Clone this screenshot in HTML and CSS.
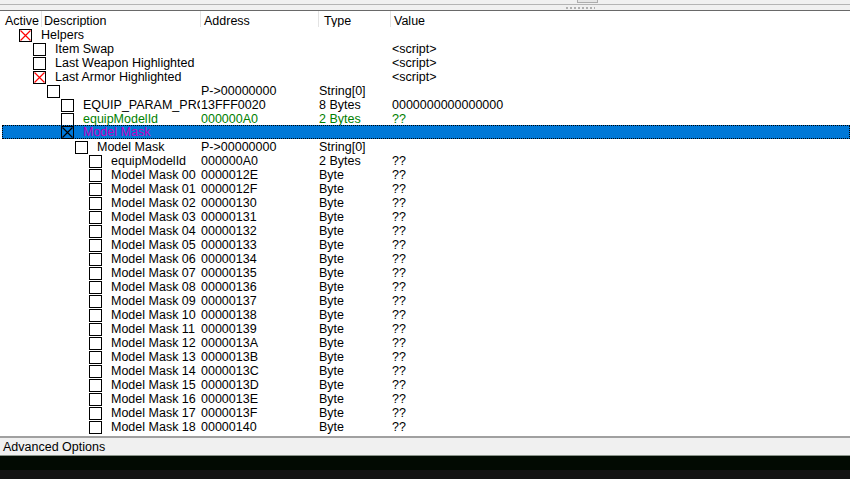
FILE: index.html
```html
<!DOCTYPE html>
<html>
<head>
<meta charset="utf-8">
<link rel="stylesheet" href="styles.css">
</head>
<body>
<div class="app">
  <div class="topbar">
    <div class="topbtn"></div>
  </div>
  <div class="splitter"><span class="grip"></span></div>
  <div class="tree">
    <div class="header">
      <div class="h h-active">Active</div>
      <div class="h h-desc">Description</div>
      <div class="h h-addr">Address</div>
      <div class="h h-type">Type</div>
      <div class="h h-val">Value</div>
    </div>
    <div class="rows" id="rows"></div>
  </div>
  <div class="adv">Advanced Options</div>
  <div class="strip1"></div>
  <div class="strip2"></div>
</div>
<script src="app.js"></script>
</body>
</html>
```

FILE: app.js
```js
const rows = [
  [0, 'x', 'Helpers', '', '', ''],
  [1, '', 'Item Swap', '', '', '<script>'],
  [1, '', 'Last Weapon Highlighted', '', '', '<script>'],
  [1, 'x', 'Last Armor Highlighted', '', '', '<script>'],
  [2, '', '', 'P->00000000', 'String[0]', ''],
  [3, '', 'EQUIP_PARAM_PROTECTOR', '13FFF0020', '8 Bytes', '0000000000000000'],
  [3, '', 'equipModelId', '000000A0', '2 Bytes', '??', 'green'],
  [3, 'k', 'Model Mask', '', '', '', 'sel'],
  [4, '', 'Model Mask', 'P->00000000', 'String[0]', ''],
  [5, '', 'equipModelId', '000000A0', '2 Bytes', '??']
];
const hex = ['12E','12F','130','131','132','133','134','135','136','137','138','139','13A','13B','13C','13D','13E','13F','140'];
hex.forEach((h, i) => {
  rows.push([5, '', 'Model Mask ' + String(i).padStart(2, '0'), '00000' + h, 'Byte', '??']);
});
const box = {
  '': '<svg class="cb" width="13" height="13" viewBox="0 0 13 13" shape-rendering="crispEdges"><rect x="0.5" y="0.5" width="12" height="12" fill="#fff" stroke="#000"/></svg>',
  'x': '<svg class="cb" width="13" height="13" viewBox="0 0 13 13"><rect x="0.5" y="0.5" width="12" height="12" fill="#fff" stroke="#000" shape-rendering="crispEdges"/><path d="M1.5 1.5L11.5 11.5M11.5 1.5L1.5 11.5" stroke="#ff0000" stroke-width="1.2"/></svg>',
  'k': '<svg class="cb" width="13" height="13" viewBox="0 0 13 13"><rect x="0.5" y="0.5" width="12" height="12" fill="#0078d7" stroke="#000" shape-rendering="crispEdges"/><path d="M1.5 1.5L11.5 11.5M11.5 1.5L1.5 11.5" stroke="#000" stroke-width="1.2"/></svg>'
};
const esc = s => s.replace(/&/g,'&amp;').replace(/</g,'&lt;').replace(/>/g,'&gt;');
const html = rows.map(r => {
  const [d, c, desc, addr, type, val, cls] = r;
  return `<div class="row ${cls || ''}">
    <div class="c-desc" style="padding-left:${19 + d * 14}px">${box[c]}<span class="dt">${esc(desc)}</span></div>
    <div class="c-addr">${esc(addr)}</div>
    <div class="c-type">${esc(type)}</div>
    <div class="c-val">${esc(val)}</div>
  </div>`;
}).join('');
document.getElementById('rows').innerHTML = html;
```

FILE: styles.css
```css
html, body {
  margin: 0;
  padding: 0;
  width: 850px;
  height: 479px;
  overflow: hidden;
  background: #fff;
}
.app {
  width: 850px;
  height: 479px;
  display: flex;
  flex-direction: column;
  font-family: "Liberation Sans", Arial, sans-serif;
  font-size: 12.5px;
  color: #000;
}
.topbar {
  height: 4px;
  background: #f0f0f0;
  border-bottom: 1px solid #b4b4b4;
  position: relative;
}
.topbtn {
  position: absolute;
  left: 577px;
  top: -1px;
  width: 19px;
  height: 2px;
  border: 1px solid #adadad;
  background: #e6e6e6;
}
.splitter {
  height: 5px;
  background: #f0f0f0;
  border-bottom: 1px solid #696969;
  display: flex;
  justify-content: flex-start;
  align-items: center;
}
.grip {
  margin-left: 566px;
  width: 29px;
  height: 2px;
  background: repeating-linear-gradient(90deg, #b0b0b0 0 2px, transparent 2px 4px);
}
.tree {
  flex: 0 0 424px;
  background: #fff;
  display: flex;
  flex-direction: column;
  overflow: hidden;
}
.header {
  height: 16px;
  display: flex;
  align-items: stretch;
}
.h {
  line-height: 16px;
  padding-top: 2px;
  box-sizing: border-box;
  white-space: nowrap;
  overflow: hidden;
}
.h-active { width: 41px; padding-left: 5px; }
.h-desc { width: 159px; padding-left: 2px; }
.h-addr { width: 118px; padding-left: 3px; }
.h-type { width: 72px; padding-left: 5px; }
.h-val { flex: 1; padding-left: 3px; }
.h-desc, .h-addr, .h-type, .h-val { border-left: 1px solid #e3e3e3; }
.rows {
  display: flex;
  flex-direction: column;
}
.row {
  height: 14px;
  line-height: 14px;
  display: flex;
  white-space: nowrap;
  box-sizing: border-box;
}
.row > div {
  overflow-x: clip;
  overflow-y: visible;
  padding-top: 1px;
  box-sizing: border-box;
  height: 14px;
}
.c-desc {
  width: 200px;
  display: flex;
  align-items: center;
  flex: 0 0 auto;
}
.cb {
  flex: 0 0 13px;
  margin-right: 9px;
  margin-top: 1px;
}
.c-addr { width: 118px; padding-left: 1px; flex: 0 0 auto; }
.c-type { width: 72px; padding-left: 1px; flex: 0 0 auto; }
.c-val { flex: 1; padding-left: 2px; }
.row.green { color: #008000; }
.row.sel {
  background: #0078d7;
  color: #c000c0;
  margin-left: 2px;
  border: 1px dotted #000;
  line-height: 12px;
}
.row.sel > div { height: 12px; padding-top: 0; }
.row.sel .c-desc { width: 198px; padding-left: 58px !important; }
.row.sel .cb { margin-top: 0; }
.adv {
  margin-top: 1px;
  border-top: 2px solid #a0a0a0;
  height: 17px;
  line-height: 18px;
  background: #f0f0f0;
  padding-left: 3px;
  border-bottom: 1px solid #8a948a;
}
.strip1 {
  height: 14px;
  background: #020a02;
}
.strip2 {
  flex: 1;
  background: #131313;
}
```
